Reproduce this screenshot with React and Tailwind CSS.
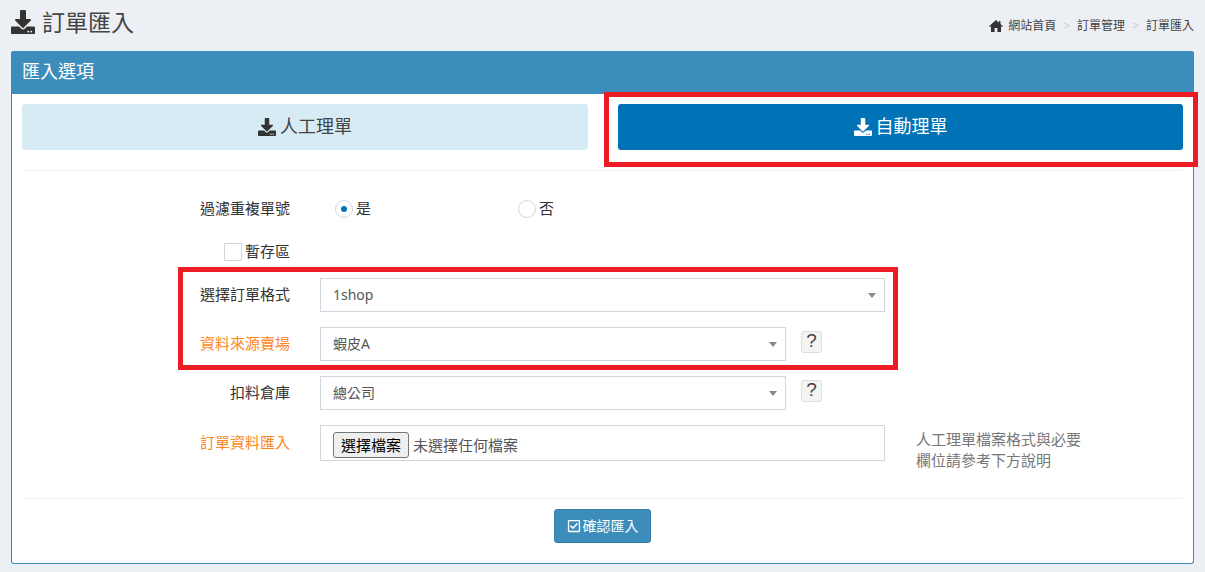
import React from "react";
import { FaDownload, FaRegCheckSquare } from "react-icons/fa";

const FONT = "font-['Noto_Sans','Noto_Sans_CJK_TC',sans-serif]";

function Select({ value, className }) {
  return (
    <div className={`h-[34px] border border-[#d2d6de] bg-white pl-3 pr-[12px] flex items-center justify-between ${className}`}>
      <span className="text-[14px] text-[#555] pb-[2px]">{value}</span>
      <span className="w-0 h-0 mr-[-4px] border-x-[4px] border-x-transparent border-t-[5px] border-t-[#888]" />
    </div>
  );
}

function Help() {
  return (
    <div className="w-[21px] h-[22px] ml-[15px] -mt-[4px] pb-[3px] rounded-[3px] border border-[#ddd] bg-[#f4f4f4] flex items-center justify-center text-[19px] leading-none text-[#444] font-['Liberation_Sans',sans-serif]">?</div>
  );
}

function Row({ label, orange, className, children }) {
  return (
    <div className={`flex items-center ${className}`}>
      <label className={`w-[268px] pb-[2px] text-right text-[15px] leading-[20px] ${orange ? "text-[#ff851b]" : "text-[#333]"}`}>{label}</label>
      <div className="ml-[30px] flex items-center">{children}</div>
    </div>
  );
}

export default function App() {
  return (
    <div className={`${FONT} relative w-[1205px] h-[572px] overflow-hidden bg-[#ecf0f5] text-[#333]`}>
      <header className="h-[51px] pl-[11px] pr-[11px] flex items-start justify-between">
        <h1 className="flex items-center mt-[8px] text-[23px] leading-[28px] text-[#444]">
          <FaDownload className="w-[24px] h-[24px] mr-[7px] text-[#333]" />
          訂單匯入
        </h1>
        <nav className="flex items-center mt-[18px] text-[12px] leading-[16px] text-[#444]">
          <svg viewBox="0 0 14 12" className="w-[14px] h-[12px] mr-[5px] text-[#333]" fill="currentColor">
            <path d="M7 0 0 6.2l.8.9L2 6.1V12h3.600V8h2.800v4H12V6.100l1.200 1 .8-.9L11.500 4V1H10v1.700z" />
          </svg>
          <span>網站首頁</span>
          <span className="mx-[7px] text-[#ccc]">&gt;</span>
          <span>訂單管理</span>
          <span className="mx-[7px] text-[#ccc]">&gt;</span>
          <span>訂單匯入</span>
        </nav>
      </header>

      <section className="mx-[11px] h-[513px] rounded-[3px] border border-[#3c8dbc] border-t-0 bg-white">
        <div className="-mx-px h-[43px] rounded-t-[3px] bg-[#3c8dbc] pl-[11px] pb-[2px] flex items-center text-[18px] text-white">匯入選項</div>
        <div className="px-[10px]">
          <div className="flex justify-between pt-[10px] pb-[20px] border-b border-[#f0f0f0]">
            <button className="w-[566px] h-[46px] pb-[2px] rounded-[3px] bg-[#d7ebf5] flex items-center justify-center text-[18px] text-[#444]">
              <FaDownload className="w-[18px] h-[18px] mr-[4px] mt-[2px] text-[#333]" />人工理單
            </button>
            <button className="w-[565px] h-[46px] pb-[2px] rounded-[3px] bg-[#0073b7] flex items-center justify-center text-[18px] text-white">
              <FaDownload className="w-[18px] h-[18px] mr-[4px] mt-[2px]" />自動理單
            </button>
          </div>

          <div className="flex items-center mt-[28px] h-[20px]">
            <label className="w-[268px] pb-[2px] text-right text-[15px] text-[#333]">過濾重複單號</label>
            <span className="ml-[45px] w-[18px] h-[18px] rounded-full border border-[#d2d6de] flex items-center justify-center">
              <span className="w-[6px] h-[6px] rounded-full bg-[#0073b7]" />
            </span>
            <span className="ml-[3px] pb-[2px] text-[15px]">是</span>
            <span className="ml-[147px] w-[18px] h-[18px] rounded-full border border-[#d2d6de]" />
            <span className="ml-[3px] pb-[2px] text-[15px]">否</span>
          </div>

          <div className="flex items-center justify-end w-[268px] mt-[22px] h-[20px]">
            <span className="w-[18px] h-[18px] mt-[2px] border border-[#d2d6de] mr-[3px]" />
            <label className="text-[15px] text-[#333]">暫存區</label>
          </div>

          <Row label="選擇訂單格式" className="mt-[17px]">
            <Select value="1shop" className="w-[565px]" />
          </Row>
          <Row label="資料來源賣場" orange className="mt-[15px]">
            <Select value="蝦皮A" className="w-[466px]" />
            <Help />
          </Row>
          <Row label="扣料倉庫" className="mt-[15px]">
            <Select value="總公司" className="w-[466px]" />
            <Help />
          </Row>
          <div className="flex items-start mt-[15px]">
            <label className="w-[268px] mt-[7px] text-right text-[15px] leading-[20px] text-[#ff851b]">訂單資料匯入</label>
            <div className="ml-[30px] w-[565px] h-[36px] border border-[#d2d6de] pl-[12px] flex items-center">
              <button className="h-[26px] mt-[3px] px-[7px] rounded-[3px] border border-[#767676] bg-[#efefef] text-[15px] leading-[20px] text-black">選擇檔案</button>
              <span className="ml-[4px] mt-[3px] text-[15px] leading-[20px] text-[#555]">未選擇任何檔案</span>
            </div>
            <p className="ml-[31px] mt-[4px] w-[170px] text-[15px] leading-[21px] text-[#777]">人工理單檔案格式與必要欄位請參考下方說明</p>
          </div>

          <div className="mt-[27px] border-t border-[#f0f0f0] pt-[10px] flex justify-center">
            <button className="w-[97px] h-[34px] pb-[1px] rounded-[3px] border border-[#367fa9] bg-[#3c8dbc] flex items-center justify-center text-[14px] text-white">
              <FaRegCheckSquare className="w-[14px] h-[14px] mr-[2px] mt-[1px]" />確認匯入
            </button>
          </div>
        </div>
      </section>

      <div className="absolute left-[604px] top-[92px] w-[594px] h-[75px] border-[5px] border-[#ed1c24]" />
      <div className="absolute left-[178px] top-[267px] w-[720px] h-[103px] border-[5px] border-[#ed1c24]" />
    </div>
  );
}
